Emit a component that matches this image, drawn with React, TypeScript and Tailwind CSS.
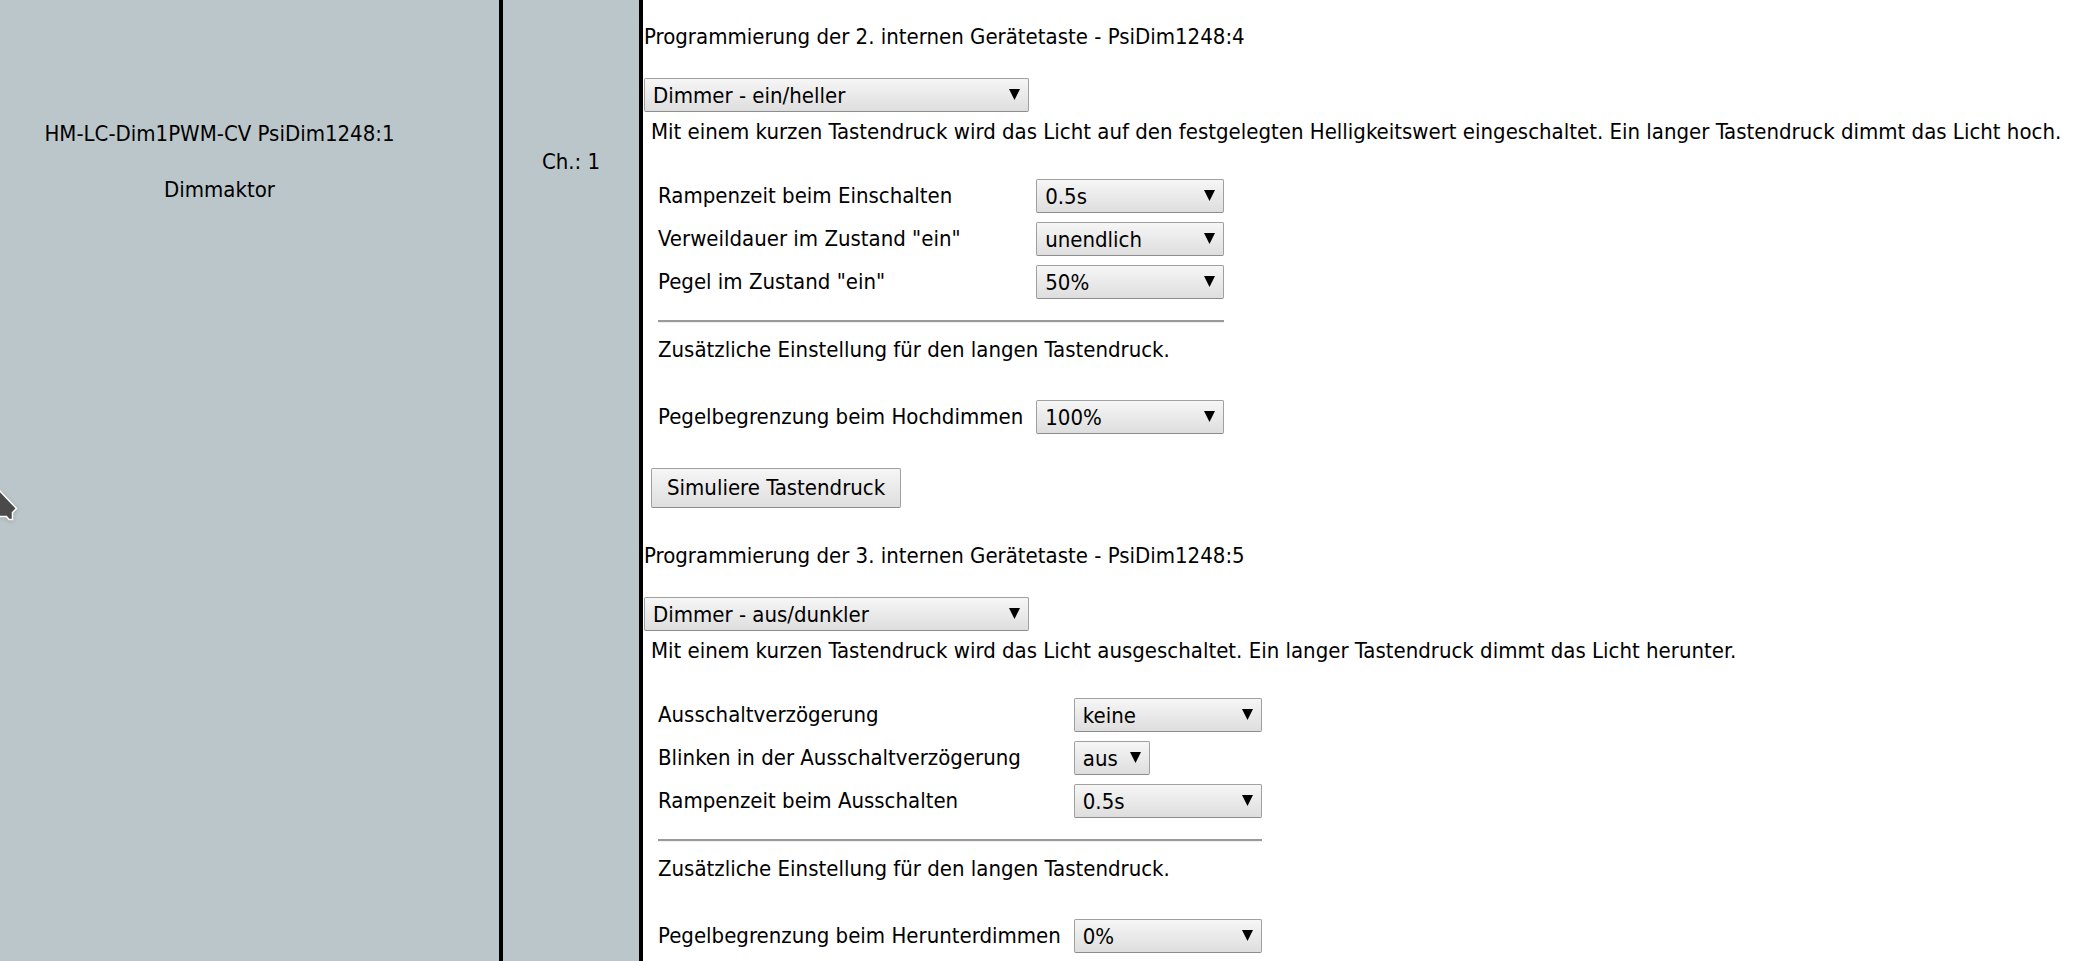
import { useId } from "react";

type Setting = { label: string; value: string; options: string[]; narrow?: boolean };

type KeyProgram = {
  title: string;
  profile: string;
  profiles: string[];
  description: string;
  settings: Setting[];
  longPress: Setting;
  canSimulate?: boolean;
};

const PROFILES = ["Dimmer - ein/heller", "Dimmer - aus/dunkler"];
const TIMES = ["keine", "0.5s", "1s", "2s", "unendlich"];
const LEVELS = ["0%", "50%", "100%"];

const PROGRAMS: KeyProgram[] = [
  {
    title: "Programmierung der 2. internen Gerätetaste - PsiDim1248:4",
    profile: "Dimmer - ein/heller",
    profiles: PROFILES,
    description:
      "Mit einem kurzen Tastendruck wird das Licht auf den festgelegten Helligkeitswert eingeschaltet. Ein langer Tastendruck dimmt das Licht hoch.",
    settings: [
      { label: "Rampenzeit beim Einschalten", value: "0.5s", options: TIMES },
      { label: 'Verweildauer im Zustand "ein"', value: "unendlich", options: TIMES },
      { label: 'Pegel im Zustand "ein"', value: "50%", options: LEVELS },
    ],
    longPress: { label: "Pegelbegrenzung beim Hochdimmen", value: "100%", options: LEVELS },
    canSimulate: true,
  },
  {
    title: "Programmierung der 3. internen Gerätetaste - PsiDim1248:5",
    profile: "Dimmer - aus/dunkler",
    profiles: PROFILES,
    description:
      "Mit einem kurzen Tastendruck wird das Licht ausgeschaltet. Ein langer Tastendruck dimmt das Licht herunter.",
    settings: [
      { label: "Ausschaltverzögerung", value: "keine", options: TIMES },
      { label: "Blinken in der Ausschaltverzögerung", value: "aus", options: ["aus", "ein"], narrow: true },
      { label: "Rampenzeit beim Ausschalten", value: "0.5s", options: TIMES },
    ],
    longPress: { label: "Pegelbegrenzung beim Herunterdimmen", value: "0%", options: LEVELS },
  },
];

function Select({
  id,
  label,
  value,
  options,
  width,
}: {
  id?: string;
  label?: string;
  value: string;
  options: string[];
  width: string;
}) {
  return (
    <div className={`relative ${width}`}>
      <select
        id={id}
        aria-label={label}
        defaultValue={value}
        className="block h-[34px] w-full appearance-none rounded-xs border border-[#a0a0a0] border-b-[#8c8c8c] bg-linear-to-b from-[#f6f6f6] to-[#dedede] pt-px pl-2 leading-7 text-black"
      >
        {options.map((o) => (
          <option key={o}>{o}</option>
        ))}
      </select>
      <svg
        viewBox="0 0 11 11"
        className="pointer-events-none absolute top-[11px] right-[9px] size-[11px]"
        aria-hidden="true"
      >
        <path d="M0 0H11L5.5 11Z" fill="#000" />
      </svg>
    </div>
  );
}

function SettingRow({ setting }: { setting: Setting }) {
  const id = useId();
  return (
    <>
      <label htmlFor={id}>{setting.label}</label>
      <Select
        id={id}
        value={setting.value}
        options={setting.options}
        width={setting.narrow ? "w-[76px]" : "w-[188px]"}
      />
    </>
  );
}

function Program({ program }: { program: KeyProgram }) {
  return (
    <section className="pl-px">
      <h2>{program.title}</h2>
      <div className="mt-[27px]">
        <Select label={program.title} value={program.profile} options={program.profiles} width="w-[385px]" />
      </div>
      <p className="mt-[6px] pl-[7px]">{program.description}</p>
      <div className="mt-[33px] ml-[14px] grid w-max grid-cols-[auto_188px] items-center gap-x-[13px] gap-y-[9px]">
        {program.settings.map((s) => (
          <SettingRow key={s.label} setting={s} />
        ))}
        <hr className="col-span-2 mt-3 h-[3px] border-0 border-t-2 border-[#9a9a9a] bg-[#eeeeee]" />
        <p className="col-span-2 mt-1 mb-[27px]">Zusätzliche Einstellung für den langen Tastendruck.</p>
        <SettingRow setting={program.longPress} />
      </div>
      {program.canSimulate && (
        <button
          type="button"
          className="mt-[34px] ml-[7px] h-10 rounded-xs border border-[#a0a0a0] border-b-[#8c8c8c] bg-linear-to-b from-[#f6f6f6] to-[#dedede] px-[15px]"
        >
          Simuliere Tastendruck
        </button>
      )}
    </section>
  );
}

export default function App() {
  return (
    <div className="relative flex min-h-screen bg-white font-['DejaVu_Sans_Condensed','DejaVu_Sans',sans-serif] text-[22px] leading-7 whitespace-nowrap text-black">
      <div className="flex w-[503px] shrink-0 flex-col items-center gap-7 border-r-4 border-black bg-[#bbc6ca] pt-[120px] pr-[60px]">
        <p>HM-LC-Dim1PWM-CV PsiDim1248:1</p>
        <p>Dimmaktor</p>
      </div>
      <div className="w-[140px] shrink-0 border-r-4 border-black bg-[#bbc6ca] pt-[148px] text-center">Ch.: 1</div>
      <main className="flex min-w-0 flex-1 flex-col gap-[34px] pt-[23px]">
        {PROGRAMS.map((p) => (
          <Program key={p.title} program={p} />
        ))}
      </main>
      <svg
        viewBox="0 0 20 36"
        className="absolute top-[487px] left-0 h-9 w-5 drop-shadow-sm"
        aria-hidden="true"
      >
        <path
          d="M-2 2L16.500 21.500L12.500 25.500V32.500H9L6.500 29.500H-2Z"
          fill="#4a4a4a"
          stroke="#fff"
          strokeWidth="1.500"
        />
      </svg>
    </div>
  );
}
